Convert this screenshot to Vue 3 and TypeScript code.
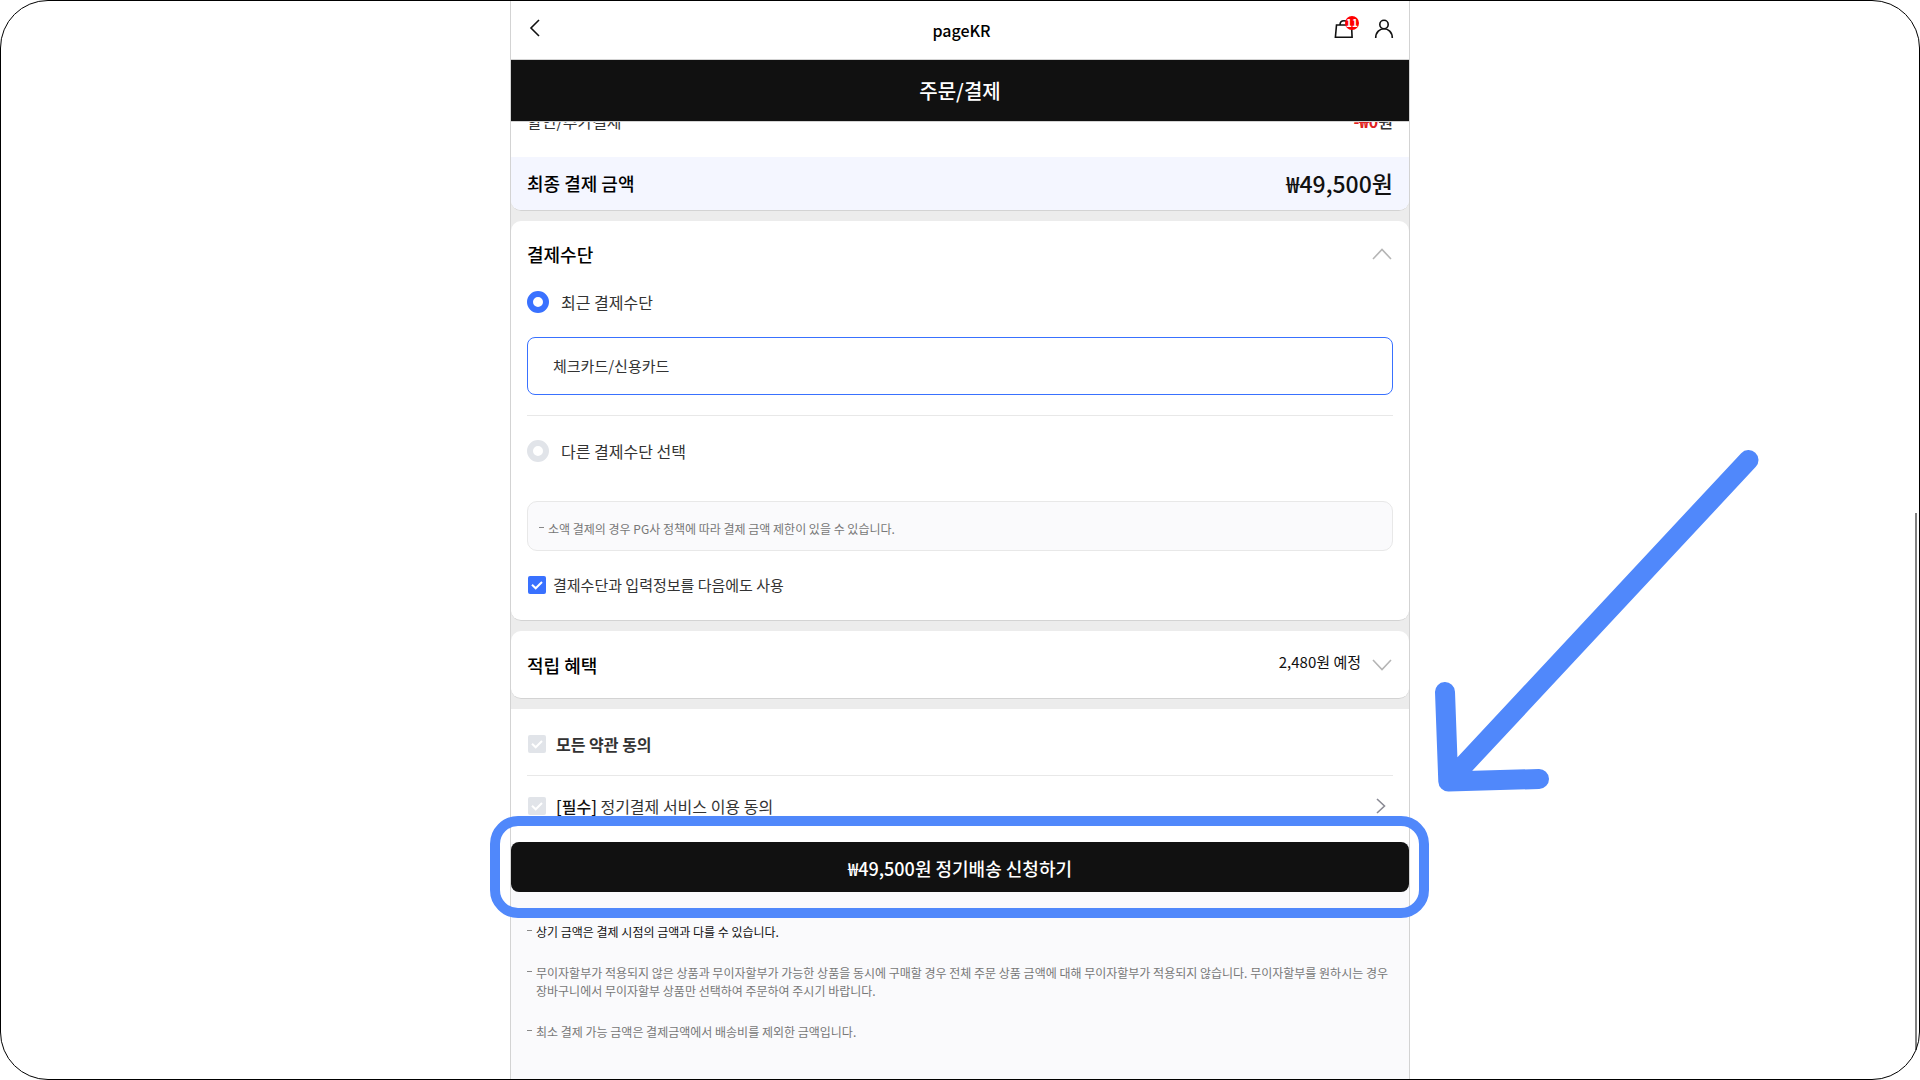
<script setup lang="ts">
import { ref } from 'vue'

interface Term {
  id: string
  required: boolean
  label: string
}

interface Notice {
  text: string
  strong: boolean
}

const total = '₩49,500원'
const cartCount = 11
const method = ref<'recent' | 'other'>('recent')
const remember = ref(true)
const agreeAll = ref(false)
const agreed = ref<string[]>([])

const terms: Term[] = [{ id: 'recurring', required: true, label: '정기결제 서비스 이용 동의' }]

const notices: Notice[] = [
  { text: '상기 금액은 결제 시점의 금액과 다를 수 있습니다.', strong: true },
  {
    text: '무이자할부가 적용되지 않은 상품과 무이자할부가 가능한 상품을 동시에 구매할 경우 전체 주문 상품 금액에 대해 무이자할부가 적용되지 않습니다. 무이자할부를 원하시는 경우 장바구니에서 무이자할부 상품만 선택하여 주문하여 주시기 바랍니다.',
    strong: false,
  },
  { text: '최소 결제 가능 금액은 결제금액에서 배송비를 제외한 금액입니다.', strong: false },
]
</script>

<template>
  <div class="page">
    <main class="column">
      <header class="topbar">
        <button class="icon-btn back" type="button" aria-label="뒤로">
          <svg width="12" height="18" viewBox="0 0 12 18"><path d="M10 1 2 9l8 8" /></svg>
        </button>
        <a class="brand" href="#">pageKR</a>
        <nav class="tools">
          <a class="tool" href="#" aria-label="장바구니">
            <svg width="20" height="20" viewBox="0 0 20 20">
              <path d="M2.500 6h15l.6 12.300H1.400z" />
              <path d="M6 6c0-5.600 8-5.600 8 0" />
            </svg>
            <span class="badge">{{ cartCount }}</span>
          </a>
          <a class="tool" href="#" aria-label="내 정보">
            <svg width="20" height="20" viewBox="0 0 20 20">
              <circle cx="10" cy="5.500" r="4.200" />
              <path d="M1.700 19c0-12.300 16.600-12.300 16.600 0" />
            </svg>
          </a>
        </nav>
      </header>
      <h1 class="title">주문/결제</h1>

      <section class="card summary">
        <div class="discount">
          <span>할인/추가결제</span>
          <span class="amount"><em>-₩0</em>원</span>
        </div>
        <div class="total">
          <h2>최종 결제 금액</h2>
          <strong>{{ total }}</strong>
        </div>
      </section>

      <section class="card padded payment">
        <div class="card-head">
          <h2>결제수단</h2>
          <button class="icon-btn" type="button" aria-label="접기">
            <svg class="fold" width="20" height="12" viewBox="0 0 20 12"><path d="m1 11 9-9.500 9 9.500" /></svg>
          </button>
        </div>
        <label class="choice">
          <input v-model="method" type="radio" name="method" value="recent" />
          <span>최근 결제수단</span>
        </label>
        <button class="selected-method" type="button">체크카드/신용카드</button>
        <label class="choice other">
          <input v-model="method" type="radio" name="method" value="other" />
          <span>다른 결제수단 선택</span>
        </label>
        <p class="hint note">소액 결제의 경우 PG사 정책에 따라 결제 금액 제한이 있을 수 있습니다.</p>
        <label class="check remember">
          <input v-model="remember" type="checkbox" />
          <span>결제수단과 입력정보를 다음에도 사용</span>
        </label>
      </section>

      <section class="card padded rewards">
        <h2>적립 혜택</h2>
        <span class="points">2,480원 예정</span>
        <button class="icon-btn" type="button" aria-label="펼치기">
          <svg class="fold" width="20" height="12" viewBox="0 0 20 12"><path d="m1 1 9 9.500L19 1" /></svg>
        </button>
      </section>

      <section class="terms padded">
        <label class="check all">
          <input v-model="agreeAll" type="checkbox" />
          <span>모든 약관 동의</span>
        </label>
        <div v-for="term in terms" :key="term.id" class="term">
          <label class="check">
            <input v-model="agreed" type="checkbox" :value="term.id" />
            <span><b v-if="term.required">[필수]</b> {{ term.label }}</span>
          </label>
          <a class="more" href="#" aria-label="약관 보기">
            <svg width="10" height="16" viewBox="0 0 10 16"><path d="m1 1 7.500 7L1 15" /></svg>
          </a>
        </div>
      </section>

      <div class="action">
        <button class="submit" type="button">{{ total }} 정기배송 신청하기</button>
        <div class="highlight" aria-hidden="true"></div>
        <svg class="arrow" width="324" height="342" viewBox="0 0 324 342" aria-hidden="true">
          <path d="M10 242l3.300 89.500 90.700-2.500M14 331 313.500 10" />
        </svg>
      </div>

      <ul class="notices">
        <li v-for="(notice, i) in notices" :key="i" class="note" :class="{ strong: notice.strong }">
          {{ notice.text }}
        </li>
      </ul>
    </main>
    <div class="scroll-thumb" aria-hidden="true"></div>
    <div class="frame" aria-hidden="true"></div>
  </div>
</template>

<style>
body {
  background: #fff;
}
</style>

<style scoped>
* {
  box-sizing: border-box;
}

.page {
  position: relative;
  display: flex;
  justify-content: center;
  min-height: 100vh;
  overflow: hidden;
  color: #333;
  font-family: 'Noto Sans CJK KR', 'Noto Sans', sans-serif;
  font-size: 16px;
  line-height: 24px;
}

.frame {
  position: absolute;
  inset: 0;
  border: 1px solid #000;
  border-radius: 48px;
  pointer-events: none;
}

.scroll-thumb {
  position: absolute;
  top: 513px;
  right: 3px;
  bottom: 30px;
  width: 2px;
  background: #808080;
}

.column {
  display: flex;
  flex-direction: column;
  width: 100%;
  max-width: 900px;
  border: solid #d3d3d3;
  border-width: 0 1px;
  background: #ececec;
}

h1,
h2,
p,
ul {
  margin: 0;
  padding: 0;
}

h2 {
  color: #000;
  font-size: 18px;
  font-weight: 500;
}

a {
  color: inherit;
  text-decoration: none;
}

button {
  padding: 0;
  border: 0;
  background: none;
  color: inherit;
  font: inherit;
}

svg {
  display: block;
  fill: none;
  stroke: #111;
  stroke-width: 1.600;
}

.topbar {
  display: grid;
  grid-template-columns: 1fr auto 1fr;
  align-items: center;
  height: 60px;
  padding: 0 15px 0 18px;
  border-bottom: 1px solid #d3d3d3;
  background: #fff;
}

.back {
  justify-self: start;
  padding-bottom: 4px;
}

.brand {
  color: #000;
  font-weight: 500;
}

.tools {
  display: flex;
  justify-content: flex-end;
  gap: 20px;
  padding-bottom: 2px;
}

.tool {
  position: relative;
}

.badge {
  position: absolute;
  top: -3px;
  right: -5px;
  width: 14px;
  height: 14px;
  border-radius: 50%;
  background: #f00;
  color: #fff;
  font-size: 10px;
  font-weight: 700;
  line-height: 14px;
  text-align: center;
}

.title {
  height: 62px;
  border-bottom: 1px solid #d3d3d3;
  background: #111;
  color: #fff;
  font-size: 20px;
  font-weight: 500;
  line-height: 62px;
  text-align: center;
}

.card {
  margin-bottom: 10px;
  border-bottom: 1px solid #d3d3d3;
  border-radius: 10px;
  background: #fff;
}

.padded {
  padding: 0 16px;
}

.summary {
  overflow: hidden;
  border-top-left-radius: 0;
  border-top-right-radius: 0;
}

.discount {
  display: flex;
  align-items: flex-end;
  justify-content: space-between;
  height: 35px;
  padding: 0 16px 24px;
  overflow: hidden;
}

.amount {
  font-weight: 500;
}

.amount em {
  color: #e02020;
  font-style: normal;
  font-weight: 700;
}

.total {
  display: flex;
  align-items: center;
  justify-content: space-between;
  height: 53px;
  padding: 0 16px 2px;
  background: #f4f6ff;
}

.total strong {
  color: #111;
  font-size: 23px;
  font-weight: 500;
}

.card-head {
  display: flex;
  align-items: center;
  justify-content: space-between;
  height: 68px;
  padding: 0 1px 2px 0;
}

.fold {
  stroke: #b5b5b5;
}

.choice,
.check {
  display: flex;
  align-items: center;
}

.choice {
  gap: 12px;
  height: 26px;
}

input {
  flex: none;
  margin: 0;
  appearance: none;
}

.choice input {
  width: 22px;
  height: 22px;
  border: 6px solid #e1e4e9;
  border-radius: 50%;
  background: #fff;
}

.choice input:checked {
  border-color: #3971ff;
}

.selected-method {
  display: block;
  width: 100%;
  height: 58px;
  margin: 22px 0 20px;
  padding: 0 25px;
  border: 1px solid #3971ff;
  border-radius: 8px;
  font-size: 15px;
  text-align: left;
}

.other {
  box-sizing: content-box;
  padding-top: 22px;
  border-top: 1px solid #e8e8e8;
}

.note {
  position: relative;
  color: #777;
  font-size: 12px;
  line-height: 18px;
}

.note::before {
  position: absolute;
  width: 5px;
  height: 1px;
  margin: 7px 0 0 -9px;
  background: #888;
  content: '';
}

.hint {
  height: 50px;
  margin: 37px 0 22px;
  padding: 18px 20px 0;
  border: 1px solid #e8e8e8;
  border-radius: 10px;
  background: #fafafc;
}

.check input {
  width: 18px;
  height: 18px;
  margin: 0 10px 0 1px;
  border-radius: 2px;
  background: #e1e4e9
    url("data:image/svg+xml,%3Csvg xmlns='http://www.w3.org/2000/svg' viewBox='0 0 18 18'%3E%3Cpath d='M4 8.700 7.700 12.300 14 6' fill='none' stroke='%23fff' stroke-width='2'/%3E%3C/svg%3E");
}

.check input:checked {
  background-color: #3971ff;
}

.remember {
  height: 24px;
  margin-bottom: 23px;
  font-size: 15px;
}

.remember input {
  margin-right: 7px;
}

.rewards {
  display: flex;
  align-items: center;
  height: 68px;
  padding-right: 17px;
}

.points {
  margin: 0 11px 6px auto;
  color: #111;
  font-size: 15px;
}

.terms {
  padding-bottom: 6px;
  background: #fff;
}

.all {
  height: 66px;
  padding-top: 4px;
  font-weight: 700;
}

.term {
  display: flex;
  align-items: center;
  justify-content: space-between;
  height: 61px;
  border-top: 1px solid #e8e8e8;
}

.term b {
  color: #111;
  font-weight: 500;
}

.more {
  margin-right: 7px;
}

.more svg {
  stroke: #8a8a94;
}

.action {
  position: relative;
  background: #fafafc;
}

.submit {
  display: block;
  width: 100%;
  height: 50px;
  padding-top: 2px;
  border-radius: 8px;
  background: #111;
  color: #fff;
  font-size: 18px;
  font-weight: 500;
}

.highlight {
  position: absolute;
  inset: -26px -20px -26px -21px;
  border: 10px solid #5088fb;
  border-radius: 28px;
  pointer-events: none;
}

.arrow {
  position: absolute;
  bottom: 100px;
  left: calc(100% + 26px);
  stroke: #5088fb;
  stroke-linecap: round;
  stroke-linejoin: round;
  stroke-width: 20;
  pointer-events: none;
}

.notices {
  display: flex;
  flex: 1;
  flex-direction: column;
  gap: 23px;
  padding: 31px 16px 38px 25px;
  background: #fafafc;
  list-style: none;
}

.strong {
  color: #111;
}
</style>
